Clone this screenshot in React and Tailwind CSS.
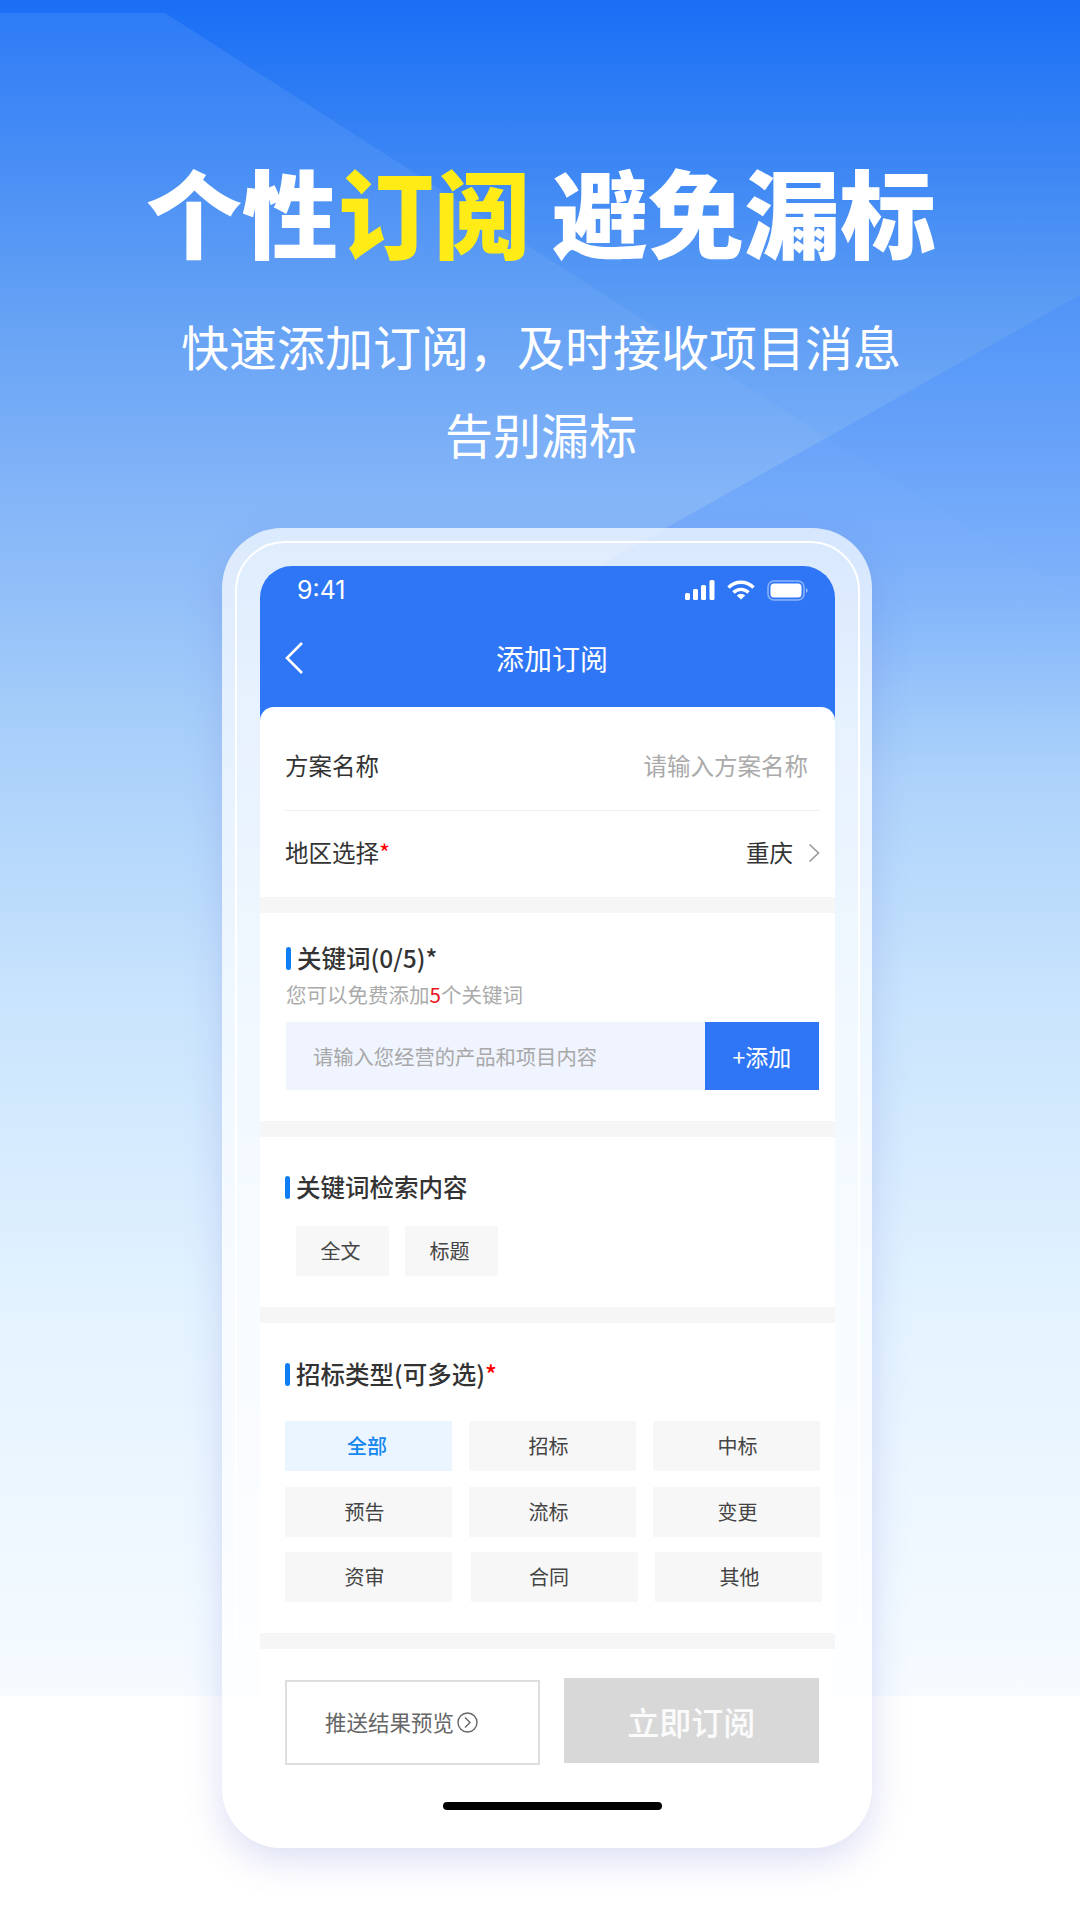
import React from 'react'

const cjk = "font-['Noto_Sans_CJK_SC','Liberation_Sans',sans-serif]"

function SectionTitle({ children, className = '' }) {
    return (
        <div className={`flex items-center gap-[6px] h-[23px] text-[24.500px] leading-[23px] font-medium text-[#333] ${className}`}>
            <span className="w-[5px] h-[23px] rounded-full bg-[#0f7ef5]" />
            <div className="-mt-[2px]">{children}</div>
        </div>
    )
}

function Tag({ label, className = 'w-[167px]', active }) {
    return (
        <div className={`flex items-center justify-center h-[50px] text-[20px] ${active ? 'bg-[#ebf5ff] text-[#1487f0] font-medium' : 'bg-[#f7f7f7] text-[#444]'} ${className}`}>
            {label}
        </div>
    )
}

function Gap() {
    return <div className="h-[16px] bg-[#f6f6f6]" />
}

function StatusIcons() {
    return (
        <div className="flex items-center gap-[12px]">
            <svg width="30" height="20" viewBox="0 0 30 20" fill="#fff">
                <rect x="0" y="13" width="5" height="7" rx="1.5" />
                <rect x="8" y="9" width="5" height="11" rx="1.5" />
                <rect x="16" y="5" width="5" height="15" rx="1.5" />
                <rect x="24.5" y="0" width="5" height="20" rx="1.5" />
            </svg>
            <svg width="28" height="20" viewBox="0 0 28 20" fill="none" stroke="#fff" strokeWidth="3.4">
                <path d="M1.5 7.5A17.5 17.5 0 0 1 26.5 7.5" />
                <path d="M6.5 12.5A10.5 10.5 0 0 1 21.5 12.5" />
                <path d="M14 19.5L9.8 15.4A6 6 0 0 1 18.2 15.4Z" fill="#fff" stroke="none" />
            </svg>
            <svg width="41" height="21" viewBox="0 0 41 21" fill="none">
                <rect x="1" y="1" width="36" height="19" rx="6" stroke="#fff" strokeOpacity="0.45" strokeWidth="1.5" />
                <rect x="3.5" y="3.5" width="31" height="14" rx="3.5" fill="#fff" />
                <path d="M39 8v5c1-.4 1.6-1.4 1.6-2.5S40 8.400 39 8Z" fill="#fff" fillOpacity="0.5" />
            </svg>
        </div>
    )
}

export default function App() {
    return (
        <div className={`relative w-[1080px] h-[1920px] overflow-hidden ${cjk} bg-[linear-gradient(180deg,#196ef5_0px,#5a9bf4_300px,#82b4f8_500px,#a6cefa_720px,#c9e4fd_1000px,#e4f3ff_1320px,#f6fbff_1695px,#ffffff_1697px)]`}>
            {/* background shapes */}
            <svg className="absolute left-0 top-0" width="1080" height="800" viewBox="0 0 1080 800">
                <defs>
                    <linearGradient id="sheet" x1="0" y1="0" x2="0" y2="640" gradientUnits="userSpaceOnUse">
                        <stop offset="0" stopColor="#fff" stopOpacity="0.08" />
                        <stop offset="0.5" stopColor="#fff" stopOpacity="0.05" />
                        <stop offset="1" stopColor="#fff" stopOpacity="0" />
                    </linearGradient>
                    <linearGradient id="wedge" x1="0" y1="300" x2="0" y2="780" gradientUnits="userSpaceOnUse">
                        <stop offset="0" stopColor="#3d86ff" stopOpacity="0.32" />
                        <stop offset="0.55" stopColor="#3d86ff" stopOpacity="0.22" />
                        <stop offset="1" stopColor="#3d86ff" stopOpacity="0" />
                    </linearGradient>
                </defs>
                <path d="M0 13H165L1080 600V640H0Z" fill="url(#sheet)" />
                <path d="M1080 295L600 565V780H1080Z" fill="url(#wedge)" />
            </svg>

            <div className="relative">
                <h1 className="pt-[154px] pl-[2px] text-center text-[96px] leading-[112px] font-black text-white">
                    个性<span className="text-[#ffec17]">订阅</span> 避免漏标
                </h1>
                <div className="mt-[35px] pl-[2px] text-center text-[48px] leading-[88px] text-white">
                    <div>快速添加订阅，及时接收项目消息</div>
                    <div>告别漏标</div>
                </div>

                {/* phone */}
                <div className="relative mt-[51px] ml-[222px] w-[650px] h-[1320px] pt-[38px] pl-[38px] pr-[37px] rounded-[60px] bg-white/70 shadow-[0_12px_36px_rgba(95,105,205,0.22)]">
                    <div className="absolute left-[13px] right-[12px] top-[13px] bottom-[13px] rounded-[50px] border-2 border-white bg-white/10" />

                    <div className="relative rounded-t-[32px] overflow-hidden">
                        <div className="bg-[#2f76f6] h-[157px] text-white">
                            <div className="flex items-center justify-between h-[48px] pl-[37px] pr-[27px]">
                                <span className="font-['Inter',sans-serif] text-[25px] mt-[1px]">9:41</span>
                                <StatusIcons />
                            </div>
                            <div className="relative flex items-center justify-center mt-[12px] h-[64px] text-[28px]">
                                <svg className="absolute left-[24px]" width="20" height="34" viewBox="0 0 20 34" fill="none" stroke="#fff" strokeWidth="2.6">
                                    <path d="M18 2L3 17L18 32" />
                                </svg>
                                <span className="ml-[9px] -mt-[1px]">添加订阅</span>
                            </div>
                        </div>

                        <div className="relative -mt-[16px] rounded-t-[14px] flex flex-col">
                            <div className="bg-white rounded-t-[14px] pt-[17px] pl-[25px] pr-[15px] text-[23.500px] text-[#333]">
                                <div className="flex items-center justify-between h-[87px] pb-[2px] pr-[12px] border-b border-[#f0f0f0]">
                                    <span>方案名称</span>
                                    <span className="text-[#aaa]">请输入方案名称</span>
                                </div>
                                <div className="flex items-center justify-between h-[86px] pb-[2px]">
                                    <span>地区选择<span className="text-[#f00]">*</span></span>
                                    <div className="flex items-center gap-[15px]">
                                        <span>重庆</span>
                                        <svg width="12" height="20" viewBox="0 0 12 20" fill="none" stroke="#999" strokeWidth="1.6">
                                            <path d="M1.500 1.500L10.500 10L1.500 18.500" />
                                        </svg>
                                    </div>
                                </div>
                            </div>
                            <Gap />

                            <div className="bg-white h-[208px] pt-[34px] pl-[26px] pr-[16px]">
                                <SectionTitle>关键词(0/5)*</SectionTitle>
                                <div className="mt-[10px] h-[28px] leading-[28px] text-[20.500px] text-[#aaa]">
                                    您可以免费添加<span className="text-[#e8141c]">5</span>个关键词
                                </div>
                                <div className="mt-[14px] flex h-[68px]">
                                    <div className="flex-1 flex items-center pl-[27px] bg-[#eff4ff] text-[20.300px] text-[#a8a8a8]">请输入您经营的产品和项目内容</div>
                                    <div className="w-[114px] flex items-center justify-center bg-[#2f76f6] text-white text-[23px]">+添加</div>
                                </div>
                            </div>
                            <Gap />

                            <div className="bg-white h-[170px] pt-[39px] pl-[25px]">
                                <SectionTitle>关键词检索内容</SectionTitle>
                                <div className="mt-[27px] ml-[11px] flex gap-[16px]">
                                    <Tag label="全文" className="w-[93px] pr-[4px]" />
                                    <Tag label="标题" className="w-[93px] pr-[4px]" />
                                </div>
                            </div>
                            <Gap />

                            <div className="bg-white h-[310px] pt-[40px] pl-[25px]">
                                <SectionTitle>招标类型(可多选)<span className="text-[#f00]">*</span></SectionTitle>
                                <div className="mt-[35px] flex flex-col gap-[15.500px]">
                                    <div className="flex gap-[17px]">
                                        <Tag label="全部" active className="w-[167px] pr-[3px]" />
                                        <Tag label="招标" className="w-[167px] pr-[8px]" />
                                        <Tag label="中标" className="w-[167px] pl-[2px]" />
                                    </div>
                                    <div className="flex gap-[17px]">
                                        <Tag label="预告" className="w-[167px] pr-[8px]" />
                                        <Tag label="流标" className="w-[167px] pr-[8px]" />
                                        <Tag label="变更" className="w-[167px] pl-[2px]" />
                                    </div>
                                    <div className="flex gap-[17px]">
                                        <Tag label="资审" className="w-[167px] pr-[8px]" />
                                        <Tag label="合同" className="w-[167px] ml-[2px] pr-[11px]" />
                                        <Tag label="其他" className="w-[167px] pl-[2px]" />
                                    </div>
                                </div>
                            </div>
                            <Gap />

                            <div className="bg-linear-to-b from-white from-70% to-white/0 h-[172px] pt-[29px] pl-[25px] pr-[16px]">
                                <div className="flex items-start gap-[24px]">
                                    <div className="mt-[2px] w-[255px] h-[85px] flex items-center pl-[38px] gap-[3px] border-2 border-[#dedede] text-[21.500px] text-[#666]">
                                        <span>推送结果预览</span>
                                        <svg width="21" height="21" viewBox="0 0 21 21" fill="none" stroke="#666" strokeWidth="1.4">
                                            <circle cx="10.500" cy="10.500" r="9.500" />
                                            <path d="M8 5.500L13 10.500L8 15.500" />
                                        </svg>
                                    </div>
                                    <div className="w-[256px] h-[85px] flex items-center justify-center bg-[#d8d8d8] text-white/90 font-medium text-[32px]">立即订阅</div>
                                </div>
                                <div className="mt-[37px] ml-[158px] w-[219px] h-[8px] rounded-full bg-black" />
                            </div>
                        </div>
                    </div>
                </div>
            </div>
        </div>
    )
}
